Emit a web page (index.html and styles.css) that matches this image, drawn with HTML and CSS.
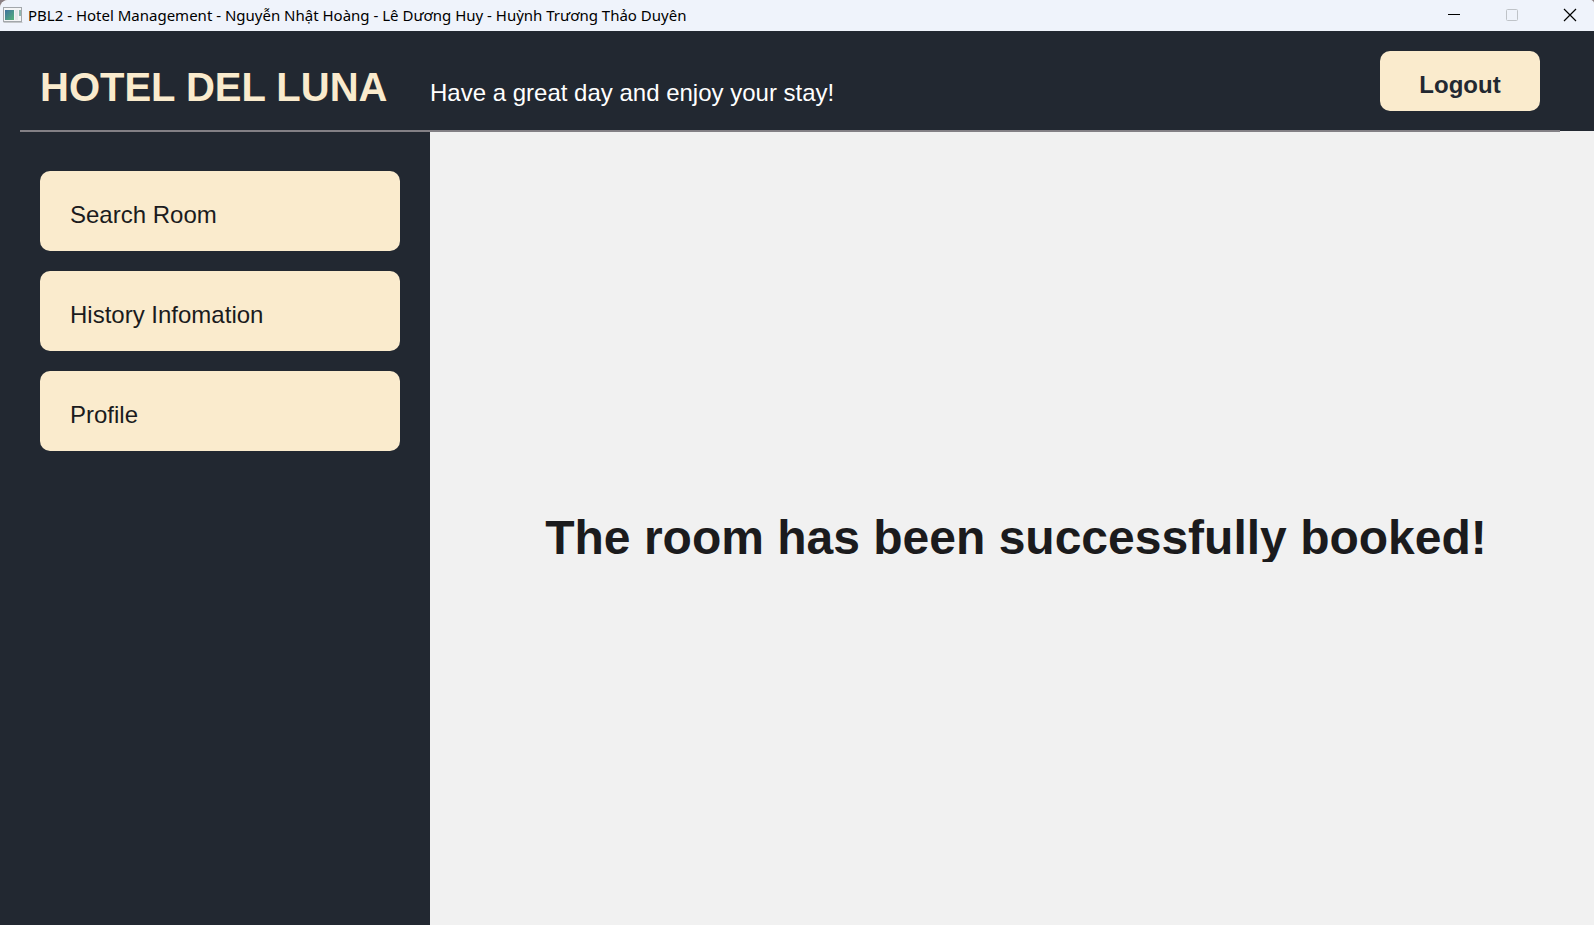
FILE: index.html
```html
<!DOCTYPE html>
<html lang="en">
<head>
<meta charset="utf-8">
<title>PBL2 - Hotel Management</title>
<link rel="stylesheet" href="styles.css">
</head>
<body>
<div class="titlebar">
  <svg class="app-icon" width="20" height="16" viewBox="0 0 20 16" aria-hidden="true">
    <defs><linearGradient id="pane" x1="0" y1="0" x2="1" y2="1"><stop offset="0" stop-color="#3f72a0"/><stop offset="1" stop-color="#55b378"/></linearGradient></defs>
    <rect x="0.5" y="0.5" width="18" height="14" fill="#f4f5f6" stroke="#a3a7ab"/>
    <path d="M0.5 15.5h19" stroke="#c4c7ca"/>
    <rect x="2" y="3" width="9" height="10" fill="url(#pane)"/>
    <rect x="12" y="3" width="3" height="10" fill="#e6e8ea"/>
    <rect x="16" y="3" width="2" height="6" fill="#8fb7b0"/>
  </svg>
  <span class="window-title">PBL2 - Hotel Management - Nguyễn Nhật Hoàng - Lê Dương Huy - Huỳnh Trương Thảo Duyên</span>
  <div class="window-controls">
    <button class="control" type="button" aria-label="Minimize"><svg width="14" height="14" viewBox="0 0 14 14"><path d="M1 6.5h12" stroke="#000"/></svg></button>
    <button class="control" type="button" aria-label="Maximize" disabled><svg width="14" height="14" viewBox="0 0 14 14"><rect x="1.5" y="1.5" width="11" height="11" rx="1" fill="none" stroke="#bfc3c8"/></svg></button>
    <button class="control" type="button" aria-label="Close"><svg width="14" height="14" viewBox="0 0 14 14"><path d="M1 1l12 12M13 1L1 13" stroke="#000" stroke-width="1.2"/></svg></button>
  </div>
</div>
<header class="header">
  <div class="header-row">
    <h1 class="brand">HOTEL DEL LUNA</h1>
    <p class="greeting">Have a great day and enjoy your stay!</p>
    <button class="logout" type="button">Logout</button>
  </div>
  <hr class="divider">
</header>
<div class="layout">
  <nav class="sidebar">
    <button class="nav-item" type="button">Search Room</button>
    <button class="nav-item" type="button">History Infomation</button>
    <button class="nav-item" type="button">Profile</button>
  </nav>
  <main class="content">
    <h2 class="message">The room has been successfully booked!</h2>
  </main>
</div>
</body>
</html>
```
FILE: styles.css
```css
* { box-sizing: border-box; }

html { background: #8a8084; }

body {
  margin: 0;
  min-height: 100vh;
  display: flex;
  flex-direction: column;
  background: #f1f1f1;
  border-radius: 8px 4px 0 0;
  font-family: "Liberation Sans", Arial, sans-serif;
}

button { font: inherit; border: 0; }

.titlebar {
  height: 31px;
  display: flex;
  align-items: center;
  gap: 5px;
  padding: 0 0 2px 3px;
  background: #eff3fb;
  border-radius: 8px 4px 0 0;
}

.window-title {
  flex: 1;
  color: #000;
  font-family: "Noto Sans", "Open Sans", sans-serif;
  font-size: 15px;
  line-height: 24px;
}

.window-controls { display: flex; }

.control {
  width: 58px;
  height: 28px;
  padding: 0 0 0 9px;
  display: grid;
  place-items: center;
  background: none;
}

.header { background: #222831; }

.header-row {
  display: flex;
  align-items: baseline;
  height: 99px;
  padding: 32px 54px 0 40px;
}

.brand {
  width: 390px;
  margin: 0;
  color: #faebcd;
  font-size: 40px;
  line-height: 48px;
}

.greeting {
  flex: 1;
  margin: 0;
  color: #fff;
  font-size: 24px;
  line-height: 28px;
}

.logout {
  align-self: flex-start;
  width: 160px;
  height: 60px;
  margin-top: -12px;
  padding: 8px 0 0;
  border-radius: 10px;
  background: #faebcd;
  color: #222831;
  font-size: 24px;
  font-weight: bold;
}

.divider {
  position: relative;
  height: 2px;
  margin: 0 34px -1px 20px;
  border: 0;
  background: #838085;
}

.layout {
  flex: 1;
  display: flex;
}

.sidebar {
  width: 430px;
  display: flex;
  flex-direction: column;
  gap: 20px;
  padding: 40px 30px 40px 40px;
  background: #222831;
}

.nav-item {
  height: 80px;
  padding: 8px 30px 0;
  border-radius: 10px;
  background: #faebcd;
  color: #1b1b1d;
  font-size: 24px;
  text-align: left;
}

.content {
  flex: 1;
  display: grid;
  place-items: center;
  padding: 16px 0 0 8px;
}

.message {
  margin: 0;
  height: 52px;
  overflow: hidden;
  color: #1b1b1d;
  font-size: 48px;
  line-height: 56px;
}
```
